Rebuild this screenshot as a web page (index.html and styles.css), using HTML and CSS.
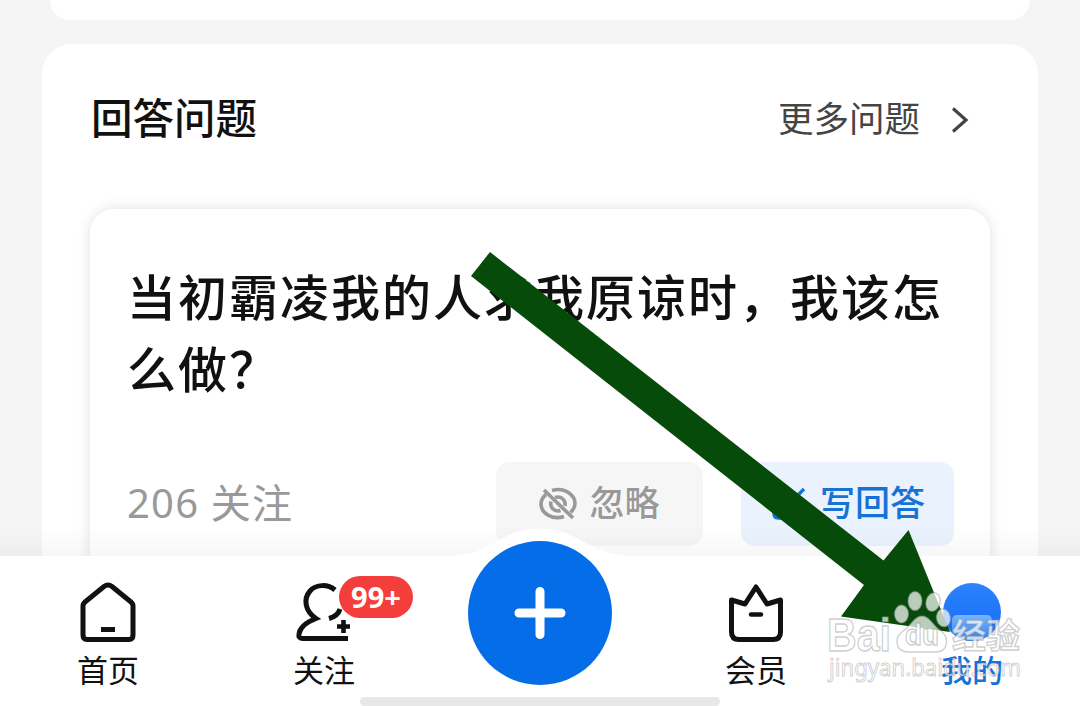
FILE: index.html
```
<!DOCTYPE html>
<html lang="zh-CN">
<head>
<meta charset="UTF-8">
<meta name="viewport" content="width=device-width, initial-scale=1.0">
<title>我的</title>
<link rel="stylesheet" href="styles.css">
</head>
<body>

<div class="app">
  <main class="content">
    <div class="prev-card"></div>
    <section class="card">
      <div class="card-header">
        <h2>回答问题</h2>
        <a class="more">更多问题
          <svg width="18" height="28" viewBox="0 0 18 28"><path d="M2 2.5L15 14L2 25.5" fill="none" stroke="#444" stroke-width="3.2"/></svg>
        </a>
      </div>
      <div class="question">
        <h3>当初霸凌我的人求我原谅时，我该怎么做？</h3>
        <div class="question-footer">
          <span class="follow">206 关注</span>
          <button class="btn ignore">
            <svg width="38" height="36" viewBox="0 0 38 36" fill="none" stroke="#999" stroke-width="3.6">
              <path d="M13 4.5C27 .5 36 10 36 17.500C36 21 34 24 31.500 26.500M25 30.500C13 34.500 2 27 2 18C2 14 4 11 7 8.500"/>
              <path d="M16 11.500C22 9.500 27 14 26 20M21.500 24.500C15 26.500 10.500 21 12 15.500"/>
              <path d="M5 4L34 32"/>
            </svg>
            <span>忽略</span>
          </button>
          <button class="btn write">
            <svg width="38" height="36" viewBox="0 0 38 36" fill="none" stroke="#1772d6" stroke-width="3.400">
              <path d="M15 4H8Q4 4 4 8V28Q4 32 8 32H28Q32 32 32 28V21M14 23L34 3"/>
            </svg>
            <span>写回答</span>
          </button>
        </div>
      </div>
    </section>
    <div class="nav-shadow"></div>
  </main>

  <nav class="tabbar">
    <svg class="bump" width="180" height="30" viewBox="0 0 180 30"><path d="M0 28C43 27 50 .5 90 .5S137 27 180 28V30H0Z" fill="#fff"/></svg>
    <div class="tab">
      <svg width="60" height="64" viewBox="0 0 60 64" fill="none" stroke="#111" stroke-width="5">
        <path d="M5 26Q5 23.500 7 22L26 6.500Q30 3.500 34 6.500L53 22Q55 23.500 55 26V55Q55 59.500 51 59.500H9Q5 59.500 5 55Z"/>
        <path d="M23 49.500H37"/>
      </svg>
      <span>首页</span>
    </div>
    <div class="tab">
      <svg width="60" height="64" viewBox="0 0 60 64" fill="none" stroke="#111" stroke-width="5">
        <path d="M41 10C34 4 22 4 16 11C9 19 11 31 22 38.500C13 42 6 47 5 54Q4 58.500 9 58.500H54"/>
        <path d="M46 29Q44 36 35 38.500"/>
        <path d="M49.500 40V53M43 46.500H56" stroke-width="4.600"/>
      </svg>
      <span>关注</span>
      <b class="badge">99+</b>
    </div>
    <div class="tab">
      <div class="add">
        <svg width="52" height="52" viewBox="0 0 52 52"><path d="M26 4.500V47.500M5 26H47" stroke="#fff" stroke-width="9" stroke-linecap="round"/></svg>
      </div>
    </div>
    <div class="tab">
      <svg width="60" height="64" viewBox="0 0 60 64" fill="none" stroke="#111" stroke-width="5" stroke-linejoin="round">
        <path d="M5.500 20L19 24L30 7L41 24L54.500 20V52Q54.500 59.500 47 59.500H13Q5.500 59.500 5.500 52Z"/>
        <path d="M25 34.500H35" stroke-width="4.500" stroke-linecap="round"/>
      </svg>
      <span>会员</span>
    </div>
    <div class="tab active">
      <div class="avatar"><i></i></div>
      <span>我的</span>
    </div>
    <div class="home-indicator"></div>
  </nav>

  <svg class="overlay" width="1080" height="706" viewBox="0 0 1080 706">
    <path d="M490 252L883.500 560.500L908.500 530L950 632L841 616.500L864 585L471 276Z" fill="#074b0b"/>
    <!-- watermark -->
    <g class="mark">
      <text x="827" y="651" class="mark-brand" textLength="64" lengthAdjust="spacingAndGlyphs">Bai</text>
      <ellipse cx="901.500" cy="614" rx="7" ry="9"/>
      <ellipse cx="915" cy="601" rx="7" ry="9.500"/>
      <ellipse cx="933" cy="602" rx="7" ry="9.500" transform="rotate(15 933 602)"/>
      <ellipse cx="943.500" cy="618" rx="7" ry="9" transform="rotate(-10 943 618)"/>
      <path d="M922 616C914 616 911 626 903 631C893 638 896 652 908 652H936C948 652 950 638 941 631C933 626 930 616 922 616Z"/>
      <text x="905" y="645" class="mark-du" textLength="34" lengthAdjust="spacingAndGlyphs">du</text>
      <text x="952" y="648" class="mark-cn">经验</text>
      <text x="829" y="676" class="mark-url" textLength="192" lengthAdjust="spacingAndGlyphs">jingyan.baidu.com</text>
    </g>
  </svg>
</div>

</body>
</html>
```
FILE: styles.css
```
body, html {
  margin: 0;
  padding: 0;
  font-family: 'Noto Sans CJK SC', sans-serif;
  overflow: hidden;
}

.app {
  position: relative;
  width: 1080px;
  height: 706px;
  display: flex;
  flex-direction: column;
  background: #f5f5f5;
}

.content {
  position: relative;
  height: 556px;
  overflow: hidden;
}

.prev-card {
  height: 20px;
  margin: 0 50px 24px;
  background: #fff;
  border-radius: 0 0 26px 26px;
}

.card {
  height: 600px;
  margin: 0 42px;
  padding: 0 48px;
  background: #fff;
  border-radius: 30px;
}

.card-header {
  height: 165px;
  padding: 0 21px 21px 1px;
  box-sizing: border-box;
  display: flex;
  align-items: center;
  justify-content: space-between;
}

.card-header h2 {
  margin: 0;
  font-size: 41.5px;
  font-weight: 500;
  color: #111;
}

.more {
  display: flex;
  align-items: center;
  gap: 31px;
  font-size: 35.5px;
  color: #444;
}

.more svg {
  margin-top: 7px;
}

.question {
  height: 500px;
  padding: 50px 36px 0 37px;
  background: #fff;
  border-radius: 24px;
  box-shadow: 0 0 14px rgba(0, 0, 0, 0.12);
}

.question h3 {
  margin: 0;
  height: 203px;
  font-size: 49px;
  letter-spacing: 2px;
  line-height: 72px;
  font-weight: 500;
  color: #111;
}

.question-footer {
  display: flex;
  align-items: center;
}

.follow {
  width: 369px;
  padding-bottom: 6px;
  font-family: 'Noto Sans', 'Noto Sans CJK SC', sans-serif;
  font-size: 40px;
  letter-spacing: 1.2px;
  color: #999;
}

.btn {
  height: 84px;
  padding: 0;
  border: 0;
  border-radius: 14px;
  display: flex;
  align-items: center;
  justify-content: center;
  gap: 12px;
  font-family: inherit;
  font-size: 35px;
  font-weight: 500;
}

.btn span {
  padding-bottom: 7px;
}

.ignore {
  width: 207px;
  margin-right: 38px;
  background: #f6f6f6;
  color: #999;
}

.write {
  width: 213px;
  background: #eaf3fd;
  color: #1772d6;
}

.nav-shadow {
  position: absolute;
  left: 0;
  right: 0;
  bottom: 0;
  height: 30px;
  background: linear-gradient(rgba(0, 0, 0, 0), rgba(0, 0, 0, 0.03));
}

.tabbar {
  position: relative;
  height: 150px;
  display: grid;
  grid-template-columns: repeat(5, 216px);
  background: #fff;
}

.bump {
  position: absolute;
  left: 450px;
  top: -28px;
}

.tab {
  position: relative;
  display: flex;
  flex-direction: column;
  align-items: center;
  padding-top: 24px;
  font-size: 31px;
  line-height: 46px;
  color: #111;
}

.tab span {
  margin-top: 2px;
}

.active {
  color: #1772d6;
  font-weight: 500;
}

.badge {
  position: absolute;
  left: 123px;
  top: 20px;
  width: 74px;
  height: 42px;
  border-radius: 21px;
  background: #f43e3c;
  color: #fff;
  font: bold 29px/42px 'Noto Sans', sans-serif;
  text-align: center;
}

.add {
  width: 144px;
  height: 144px;
  margin-top: -39px;
  border-radius: 50%;
  background: #056de8;
  display: flex;
  align-items: center;
  justify-content: center;
}

.avatar {
  width: 58px;
  height: 58px;
  margin: 3px 0;
  border-radius: 50%;
  overflow: hidden;
  display: flex;
  align-items: flex-end;
  justify-content: center;
  background: linear-gradient(#2d83ff, #1568f5);
}

.avatar i {
  width: 40px;
  height: 26px;
  border-radius: 5px 5px 0 0;
  background: linear-gradient(#75b6ff, #307ff5);
}

.home-indicator {
  position: absolute;
  left: 360px;
  bottom: 0;
  width: 360px;
  height: 9px;
  border-radius: 5px;
  background: #e8e8e8;
}

.overlay {
  position: absolute;
  left: 0;
  top: 0;
}

.mark {
  fill: rgba(255, 255, 255, 0.72);
  stroke: rgba(140, 140, 140, 0.42);
  stroke-width: 1.4px;
}

.mark-brand {
  font: bold 46px 'Liberation Sans', sans-serif;
}

.mark-du {
  font: bold 30px 'Liberation Sans', sans-serif;
}

.mark-cn {
  font: bold 34px 'Noto Sans CJK SC', sans-serif;
}

.mark-url {
  font: 24px 'Noto Sans', sans-serif;
  stroke-width: 1px;
}
```
